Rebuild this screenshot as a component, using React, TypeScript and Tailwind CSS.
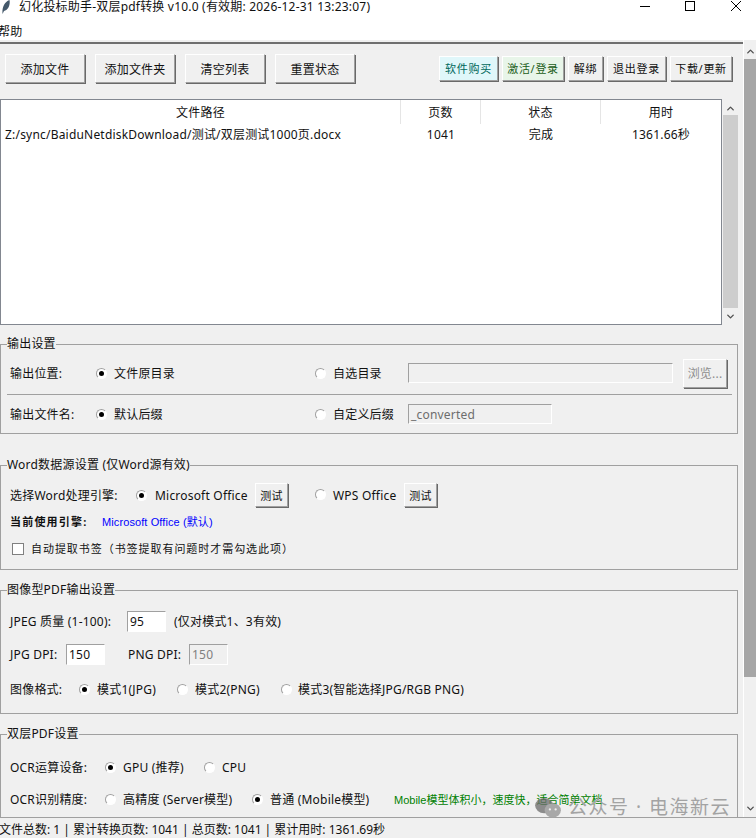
import type { ReactNode } from 'react'
import { ChevronDown, ChevronUp } from 'lucide-react'

const tkBtn =
  'flex items-center justify-center border border-white border-r-[#a0a0a0] border-b-[#a0a0a0] pt-[2px] shadow-[1px_1px_0_#696969]'
const sunken = 'border border-[#a0a0a0] border-r-white border-b-white'
const row = 'flex items-center pt-[2px]'
const up = 'mt-[-2px]'

const Radio = ({ on }: { on?: boolean }) => (
  <span className={`flex h-[11px] w-[11px] shrink-0 items-center justify-center rounded-full border border-[#a0a0a0] border-r-white border-b-white bg-white ${up}`}>
    {on && <span className="h-[5px] w-[5px] rounded-full bg-black" />}
  </span>
)

const Group = ({ title, className, children }: { title: string; className: string; children: ReactNode }) => (
  <fieldset className={`mr-[5px] border border-[#a0a0a0] pl-[9px] ${className}`}>
    <legend className="ml-[-3px] text-[12px] leading-[14px]">{title}</legend>
    {children}
  </fieldset>
)

const App = () => {
  return (
    <div className="relative flex h-[838px] w-[756px] flex-col overflow-hidden bg-[#f0f0f0] font-['Noto_Sans','Noto_Sans_CJK_SC',sans-serif] text-[12px] tracking-[0.2px] text-[#111]">
      <header className="flex h-[40px] flex-col bg-white">
        <div className="flex h-[20px] shrink-0 items-start">
          <svg viewBox="0 0 8 14" className="ml-[2px] h-[14px] w-[8px]">
            <path d="M0.5 14 C0 8 2 2 7.5 0 C8.5 5 6 10 2 11 Z" fill="#44586a" />
          </svg>
          <span className="ml-[9px] mt-[-1px] leading-[16px]">幻化投标助手-双层pdf转换 v10.0 (有效期: 2026-12-31 13:23:07)</span>
          <div className="ml-auto flex items-center pt-[1px]">
            <span className="h-px w-[10px] bg-black" />
            <span className="ml-[35px] h-[10px] w-[10px] border border-black" />
            <svg viewBox="0 0 10 10" className="ml-[36px] mr-[15px] h-[10px] w-[10px]">
              <path d="M0 0 L10 10 M10 0 L0 10" stroke="#000" strokeWidth="1" />
            </svg>
          </div>
        </div>
        <div className="ml-[-2px] leading-[24px]">帮助</div>
      </header>

      <div className="flex min-h-0 flex-1">
        <main className="flex w-[743px] flex-col">
          <div className="mt-[2px] h-[2px] bg-[#6f6f6f]" />
          <div className="flex h-[55px] items-start pt-[10px]">
            <div className="ml-[5px] flex gap-[10px]">
              {['添加文件', '添加文件夹', '清空列表', '重置状态'].map((label) => (
                <button key={label} className={`${tkBtn} h-[29px] w-[80px]`}>
                  {label}
                </button>
              ))}
            </div>
            <div className="ml-auto mr-[11px] mt-[2px] flex gap-[4px] text-[11px] tracking-[0.7px]">
              <button className={`${tkBtn} h-[25px] w-[59px] bg-[#e0f7fa] text-[#00695c]`}>软件购买</button>
              <button className={`${tkBtn} h-[25px] w-[62px] bg-[#e8f5e9] text-[#1b5e20]`}>激活/登录</button>
              <button className={`${tkBtn} h-[25px] w-[35px]`}>解绑</button>
              <button className={`${tkBtn} h-[25px] w-[59px]`}>退出登录</button>
              <button className={`${tkBtn} h-[25px] w-[62px]`}>下载/更新</button>
            </div>
          </div>

          <div className="flex h-[226px]">
            <div className="w-[722px] border border-[#828790] bg-white">
              <div className="grid h-[24px] grid-cols-[400px_80px_120px_1fr] items-center text-center">
                <span className="flex h-full items-center justify-center border-r border-[#e5e5e5] pt-[1px]">文件路径</span>
                <span className="flex h-full items-center justify-center border-r border-[#e5e5e5] pt-[1px]">页数</span>
                <span className="flex h-full items-center justify-center border-r border-[#e5e5e5] pt-[1px]">状态</span>
                <span className="pt-[1px]">用时</span>
              </div>
              <div className="grid h-[20px] grid-cols-[400px_80px_120px_1fr] items-center pt-[2px] text-center">
                <span className="pl-[4px] text-left">Z:/sync/BaiduNetdiskDownload/测试/双层测试1000页.docx</span>
                <span>1041</span>
                <span>完成</span>
                <span>1361.66秒</span>
              </div>
            </div>
            <div className="ml-[1px] flex w-[15px] flex-col items-center">
              <ChevronUp size={11} strokeWidth={3} className="mt-[4px] text-[#505050]" />
              <div className="mt-[1px] h-[193px] w-[15px] shrink-0 bg-[#cdcdcd]" />
              <ChevronDown size={11} strokeWidth={3} className="mt-[3px] text-[#505050]" />
            </div>
          </div>

          <Group title="输出设置" className="mt-[12px] h-[97px] pt-[7px]">
            <div className={`${row} h-[30px]`}>
              <span className="w-[86px]">输出位置:</span>
              <Radio on />
              <span className="ml-[7px] w-[201px]">文件原目录</span>
              <Radio />
              <span className="ml-[7px] w-[75px]">自选目录</span>
              <div className={`h-[20px] w-[265px] ${sunken} ${up}`} />
              <button className={`${tkBtn} ml-[10px] h-[29px] w-[44px] text-[#8d8d8d] ${up}`}>浏览...</button>
            </div>
            <div className="mr-[5px] ml-[-3px] mt-[6px] h-px bg-[#a0a0a0]" />
            <div className={`${row} mt-[4px] h-[30px]`}>
              <span className="w-[86px]">输出文件名:</span>
              <Radio on />
              <span className="ml-[7px] w-[201px]">默认后缀</span>
              <Radio />
              <span className="ml-[7px] w-[75px] whitespace-nowrap">自定义后缀</span>
              <div className={`h-[20px] w-[144px] pl-[2px] leading-[19px] text-[#6d6d6d] ${sunken} ${up}`}>_converted</div>
            </div>
          </Group>

          <Group title="Word数据源设置 (仅Word源有效)" className="mt-[24px] h-[112px] pt-[10px]">
            <div className={`${row} h-[26px]`}>
              <span className="w-[126px]">选择Word处理引擎:</span>
              <Radio on />
              <span className="ml-[8px] w-[100px]">Microsoft Office</span>
              <button className={`${tkBtn} h-[24px] w-[33px] text-[11px] ${up}`}>测试</button>
              <span className={`ml-[27px] ${up}`}>
                <Radio />
              </span>
              <span className="ml-[7px] w-[71px]">WPS Office</span>
              <button className={`${tkBtn} h-[24px] w-[33px] text-[11px] ${up}`}>测试</button>
            </div>
            <div className="mt-[6px] flex h-[16px] items-center text-[11px]">
              <span className="w-[92px] font-bold tracking-[1.2px]">当前使用引擎:</span>
              <span className="font-['Liberation_Sans','Noto_Sans_CJK_SC',sans-serif] tracking-[0.1px] text-[#0000ff]">Microsoft Office (默认)</span>
            </div>
            <div className="mt-[11px] flex h-[16px] items-center text-[11px] tracking-[0.95px]">
              <span className="ml-[2px] h-[12px] w-[12px] border border-[#808080] bg-white" />
              <span className="ml-[7px]">自动提取书签（书签提取有问题时才需勾选此项）</span>
            </div>
          </Group>

          <Group title="图像型PDF输出设置" className="mt-[13px] h-[131px] pt-[12px]">
            <div className={`${row} h-[24px]`}>
              <span className="w-[117px]">JPEG 质量 (1-100):</span>
              <span className={`h-[21px] w-[39px] bg-white pl-[2px] leading-[19px] ${sunken} ${up}`}>95</span>
              <span className="ml-[8px]">(仅对模式1、3有效)</span>
            </div>
            <div className={`${row} mt-[9px] h-[24px]`}>
              <span className="w-[56px]">JPG DPI:</span>
              <span className={`h-[21px] w-[39px] bg-white pl-[2px] leading-[19px] ${sunken} ${up}`}>150</span>
              <span className="ml-[23px] w-[61px]">PNG DPI:</span>
              <span className={`h-[21px] w-[39px] pl-[2px] leading-[19px] text-[#808080] ${sunken} ${up}`}>150</span>
            </div>
            <div className={`${row} mt-[11px] h-[24px]`}>
              <span className="w-[69px]">图像格式:</span>
              <Radio on />
              <span className="ml-[7px] w-[80px]">模式1(JPG)</span>
              <Radio />
              <span className="ml-[7px] w-[86px]">模式2(PNG)</span>
              <Radio />
              <span className="ml-[6px]">模式3(智能选择JPG/RGB PNG)</span>
            </div>
          </Group>

          <Group title="双层PDF设置" className="mt-[13px] h-[90px] border-b-0 pt-[14px]">
            <div className={`${row} h-[24px]`}>
              <span className="w-[95px]">OCR运算设备:</span>
              <Radio on />
              <span className="ml-[7px] w-[81px]">GPU (推荐)</span>
              <Radio />
              <span className="ml-[7px]">CPU</span>
            </div>
            <div className={`${row} mt-[8px] h-[24px]`}>
              <span className="w-[95px]">OCR识别精度:</span>
              <Radio />
              <span className="ml-[7px] w-[129px]">高精度 (Server模型)</span>
              <Radio on />
              <span className="ml-[7px] w-[124px]">普通 (Mobile模型)</span>
              <span className="font-['Liberation_Sans','Noto_Sans_CJK_SC',sans-serif] text-[11px] tracking-normal text-[#008000]">
                Mobile模型体积小，速度快，适合简单文档
              </span>
            </div>
          </Group>
        </main>

        <aside className="flex w-[13px] flex-col items-center border-l border-white">
          <ChevronUp size={11} strokeWidth={3} className="mt-[6px] text-[#505050]" />
          <div className="mt-[2px] h-[618px] w-full shrink-0 bg-[#a6a6a6]" />
          <ChevronDown size={11} strokeWidth={3} className="mt-auto mb-[3px] text-[#505050]" />
        </aside>
      </div>

      <footer className="h-[21px] border-t border-[#a0a0a0] leading-[24px] tracking-normal">
        <span className="ml-[-1px]">文件总数: 1 | 累计转换页数: 1041 | 总页数: 1041 | 累计用时: 1361.69秒</span>
      </footer>

      {/* watermark sits over the window */}
      <div className="absolute left-[534px] top-[796px] flex items-center text-[19px] tracking-[1.5px] text-[#a3a3a3]">
        <svg viewBox="0 0 28 22" className="h-[21px] w-[28px]">
          <ellipse cx="10" cy="9" rx="9.5" ry="8" fill="#6b6b6b" fillOpacity="0.75" />
          <ellipse cx="19" cy="14" rx="8.5" ry="7.5" fill="#a8a8a8" />
          <circle cx="16" cy="13" r="1.2" fill="#eee" />
          <circle cx="22" cy="13" r="1.2" fill="#eee" />
        </svg>
        <span className="ml-[6px] leading-[22px]">公众号 · 电海新云</span>
      </div>
    </div>
  )
}

export default App
